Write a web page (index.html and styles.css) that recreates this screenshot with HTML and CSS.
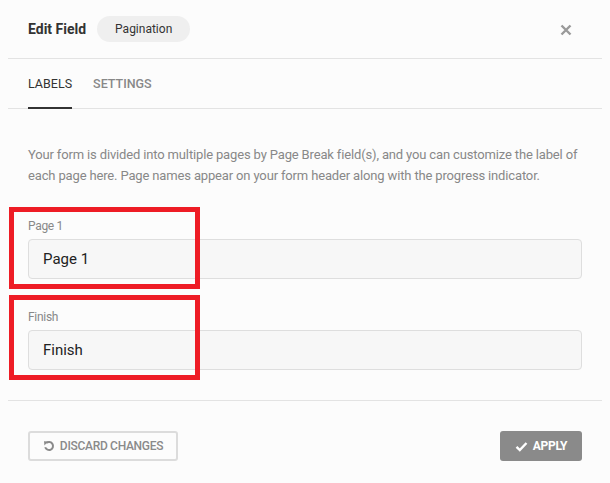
FILE: index.html
```html
<!DOCTYPE html>
<html lang="en">
<head>
<meta charset="utf-8">
<title>Edit Field</title>
<link rel="stylesheet" href="styles.css">
</head>
<body>
<div class="dialog">
  <header class="head">
    <div class="head-left">
      <span class="title">Edit Field</span>
      <span class="pill">Pagination</span>
    </div>
    <button class="close" aria-label="Close">
      <svg width="12" height="12" viewBox="0 0 12 12"><path d="M1.5 1.5 L10.5 10.5 M10.5 1.5 L1.5 10.5" stroke="#9a9a9a" stroke-width="2.4" stroke-linecap="butt"/></svg>
    </button>
  </header>
  <nav class="tabs">
    <span class="tab active">LABELS</span>
    <span class="tab">SETTINGS</span>
  </nav>
  <section class="body">
    <p class="desc">Your form is divided into multiple pages by Page Break field(s), and you can customize the label of each page here. Page names appear on your form header along with the progress indicator.</p>
    <div class="field field-first">
      <label class="field-label">Page 1</label>
      <div class="input">Page 1</div>
      <span class="mark mark-a"></span>
    </div>
    <div class="field">
      <label class="field-label">Finish</label>
      <div class="input">Finish</div>
      <span class="mark mark-b"></span>
    </div>
  </section>
  <footer class="foot">
    <button class="btn btn-discard">
      <svg width="12" height="12" viewBox="0 0 12 12"><path d="M3.2 3.1 A4 4 0 1 1 2.2 7.2" fill="none" stroke="#8a8a8a" stroke-width="2"/><path d="M1 1.2 L5 1.6 L1.4 5.4 Z" fill="#8a8a8a"/></svg>
      DISCARD CHANGES
    </button>
    <button class="btn btn-apply">
      <svg width="13" height="11" viewBox="0 0 13 11"><path d="M1.5 5.8 L4.8 9 L11.5 2" fill="none" stroke="#ffffff" stroke-width="2.4"/></svg>
      APPLY
    </button>
  </footer>
</div>
</body>
</html>
```
FILE: styles.css
```css
html, body {
  background: #fcfcfc;
}
body {
  margin: 0 8px;
  font-family: Roboto, "Liberation Sans", sans-serif;
  color: #333;
}
.dialog {
  display: flex;
  flex-direction: column;
}
.head {
  height: 58px;
  display: flex;
  align-items: center;
  justify-content: space-between;
  padding: 0 20px;
  border-bottom: 1px solid #e3e3e3;
}
.head-left {
  display: flex;
  align-items: center;
  gap: 10px;
}
.title {
  font-size: 14px;
  font-weight: 700;
  color: #333;
}
.pill {
  background: #efefef;
  border-radius: 13px;
  height: 26px;
  padding: 0 18px;
  display: flex;
  align-items: center;
  font-size: 12px;
  color: #333;
  margin-left: 1px;
}
.close {
  border: 0;
  background: none;
  padding: 0;
  margin-right: 10px;
  display: flex;
  margin-top: 1px;
}
.tabs {
  height: 49px;
  display: flex;
  gap: 21px;
  padding: 0 20px;
  border-bottom: 1px solid #e3e3e3;
}
.tab {
  display: flex;
  align-items: center;
  font-size: 12.5px;
  color: #888;
  font-weight: 500;
  border-bottom: 2px solid transparent;
  margin-bottom: -1px;
  padding-top: 1px;
}
.tab.active {
  color: #333;
  font-weight: 400;
  border-bottom-color: #333;
}
.body {
  padding: 35px 20px 30px;
  border-bottom: 1px solid #e3e3e3;
}
.desc {
  margin: 0;
  font-size: 13px;
  line-height: 21px;
  letter-spacing: -0.15px;
  color: #888;
}
.field {
  position: relative;
  margin-top: 30px;
}
.field-first {
  margin-top: 32px;
}
.field-label {
  display: block;
  font-size: 12px;
  letter-spacing: -0.3px;
  line-height: 16px;
  color: #888;
  margin-bottom: 5px;
}
.input {
  height: 38px;
  background: #f7f7f7;
  border: 1px solid #dedede;
  border-radius: 4px;
  display: flex;
  align-items: center;
  padding: 0 14px;
  font-size: 15px;
  color: #222;
}
.mark {
  position: absolute;
  left: -19px;
  width: 181px;
  border: 5px solid #ee1c25;
  pointer-events: none;
}
.mark-a {
  top: -11px;
  height: 72px;
}
.mark-b {
  top: -14px;
  height: 75px;
}
.foot {
  display: flex;
  justify-content: space-between;
  padding: 30px 20px 22px;
}
.btn {
  height: 30px;
  display: flex;
  align-items: center;
  gap: 5px;
  font-family: Roboto, "Liberation Sans", sans-serif;
  font-size: 12px;
  letter-spacing: -0.3px;
  font-weight: 500;
  border-radius: 3px;
  cursor: pointer;
}
.btn-discard {
  width: 150px;
  justify-content: center;
  background: #fcfcfc;
  border: 2px solid #dcdcdc;
  color: #8a8a8a;
}
.btn-apply {
  width: 82px;
  justify-content: center;
  background: #8a8a8a;
  border: 0;
  color: #fff;
  font-weight: 700;
}
```
